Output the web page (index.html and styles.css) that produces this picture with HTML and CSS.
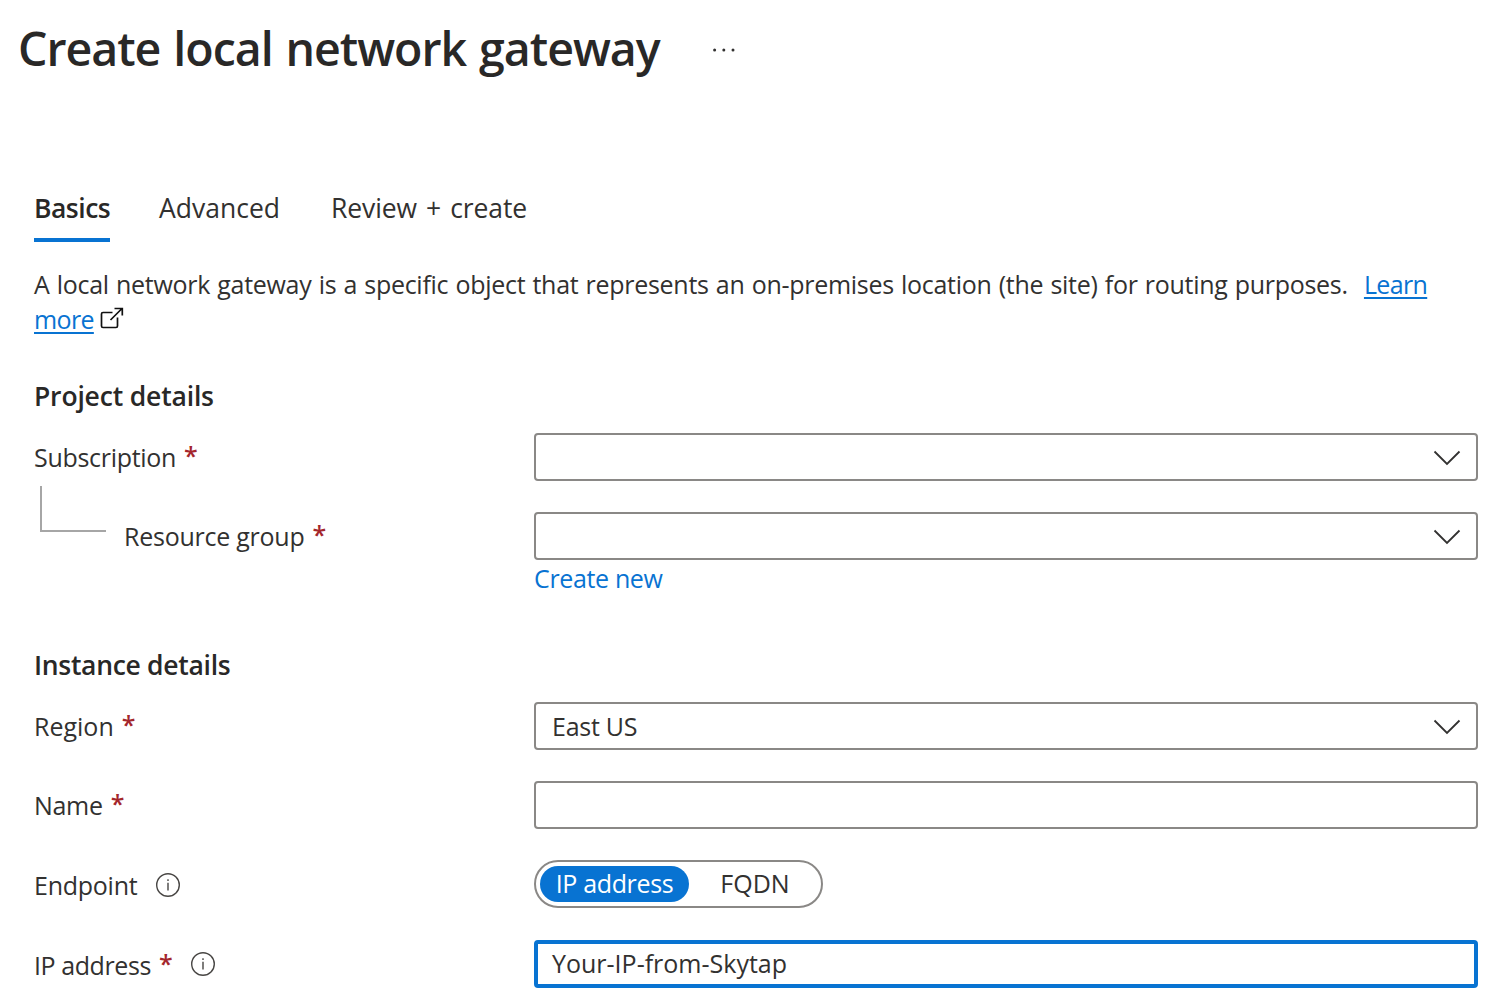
FILE: index.html
```html
<!DOCTYPE html>
<html lang="en">
<head>
<meta charset="utf-8">
<title>Create local network gateway</title>
<link rel="stylesheet" href="styles.css">
</head>
<body>
<header class="header">
  <h1 class="title">Create local network gateway</h1>
  <svg class="more-menu" width="24" height="6" viewBox="0 0 24 6"><circle cx="2.6" cy="3" r="1.5"/><circle cx="11.8" cy="3" r="1.5"/><circle cx="21" cy="3" r="1.5"/></svg>
</header>
<main class="content">
  <nav class="tabs">
    <a class="tab tab-active">Basics</a>
    <a class="tab tab-advanced">Advanced</a>
    <a class="tab tab-review">Review + create</a>
  </nav>
  <p class="description">A local network gateway is a specific object that represents an on-premises location (the site) for routing purposes. <a class="link">Learn<br>more</a><svg class="external" width="24" height="22" viewBox="0 0 24 22"><path d="M12.500 5.500H3a1.500 1.500 0 0 0-1.500 1.500V19a1.500 1.500 0 0 0 1.500 1.500H16a1.500 1.500 0 0 0 1.500-1.500V10.500M10.500 13L22 1.500M14.500 1.500H22.300V8.500"/></svg></p>

  <section class="section">
    <h2 class="heading">Project details</h2>
    <div class="row">
      <label class="label"><span class="tight">Subscription</span><span class="required">*</span></label>
      <div class="field"><svg class="chevron" width="28" height="16" viewBox="0 0 28 16"><path d="M1.500 1.500L14 14L26.500 1.500"/></svg></div>
    </div>
    <div class="row">
      <label class="label label-nested"><i class="branch"></i><span>Resource group</span><span class="required">*</span></label>
      <div class="field"><svg class="chevron" width="28" height="16" viewBox="0 0 28 16"><path d="M1.500 1.500L14 14L26.500 1.500"/></svg></div>
    </div>
    <a class="create-new">Create new</a>
  </section>

  <section class="section section-instance">
    <h2 class="heading heading-instance">Instance details</h2>
    <div class="row">
      <label class="label"><span class="loose">Region</span><span class="required">*</span></label>
      <div class="field"><span class="value">East US</span><svg class="chevron" width="28" height="16" viewBox="0 0 28 16"><path d="M1.500 1.500L14 14L26.500 1.500"/></svg></div>
    </div>
    <div class="row">
      <label class="label"><span class="tight">Name</span><span class="required">*</span></label>
      <div class="field"></div>
    </div>
    <div class="row">
      <label class="label label-low"><span>Endpoint</span><svg class="info info-endpoint" width="24" height="24" viewBox="0 0 24 24"><circle cx="12" cy="12" r="11.300"/><path d="M12 9.800V17.500M12 6.300V8"/></svg></label>
      <div class="toggle"><span class="option option-selected">IP address</span><span class="option">FQDN</span></div>
    </div>
    <div class="row row-last">
      <label class="label label-low"><span class="tighter">IP address</span><span class="required">*</span><svg class="info" width="24" height="24" viewBox="0 0 24 24"><circle cx="12" cy="12" r="11.300"/><path d="M12 9.800V17.500M12 6.300V8"/></svg></label>
      <div class="field field-focused"><span class="value value-ip">Your-IP-from-Skytap</span></div>
    </div>
  </section>
</main>
</body>
</html>
```
FILE: styles.css
```css
* { box-sizing: border-box; }
body {
  margin: 0;
  background: #fff;
  color: #323130;
  font: 400 25px/36px "Open Sans", "Noto Sans", sans-serif;
  overflow: hidden;
}
.header { display: flex; align-items: center; height: 78px; padding: 18px 0 0 18px; }
.title {
  margin: 0;
  width: 694px;
  color: #292827;
  font-size: 46.5px;
  font-weight: 600;
  line-height: 60px;
  letter-spacing: -1.02px;
  word-spacing: 1.9px;
  white-space: nowrap;
}
.more-menu { margin-top: 4px; fill: #323130; }
.content { padding: 112px 20px 0 34px; }
.tabs { display: flex; height: 52px; font-size: 26.5px; }
.tab { height: 52px; white-space: nowrap; }
.tab-active {
  width: 76px;
  margin-right: 49px;
  border-bottom: 4px solid #0873d2;
  color: #292827;
  font-weight: 600;
  letter-spacing: -0.5px;
}
.tab-advanced { width: 172px; letter-spacing: 0; }
.tab-review { letter-spacing: -0.1px; word-spacing: 2.3px; }
.description {
  margin: 25px 0 0;
  line-height: 35px;
  letter-spacing: -0.28px;
  word-spacing: 0.95px;
  white-space: nowrap;
}
.link {
  margin-left: 9px;
  color: #0873d2;
  letter-spacing: -0.65px;
  text-decoration: underline;
  text-decoration-thickness: 2px;
  text-underline-offset: 3px;
}
.external { margin-left: 6px; fill: none; stroke: #111; stroke-width: 1.7; }
.section { padding-top: 41px; }
.section-instance { padding-top: 51px; }
.heading {
  margin: 0 0 19px;
  color: #292827;
  font-size: 26.5px;
  font-weight: 600;
  line-height: 36px;
  letter-spacing: -0.17px;
}
.heading-instance { letter-spacing: -0.3px; }
.row { display: flex; height: 48px; margin-bottom: 31px; }
.row-last { margin: 32px 0 0; }
.label { display: flex; align-items: center; width: 500px; letter-spacing: -0.25px; white-space: nowrap; }
.label-low { padding-top: 2px; }
.label-nested { padding-left: 6px; }
.tight { letter-spacing: -0.3px; }
.tighter { letter-spacing: -0.42px; }
.loose { letter-spacing: 0; }
.required { margin: -5px 0 0 8px; color: #a4262c; font-weight: 600; }
.branch {
  align-self: flex-start;
  width: 66px;
  height: 46px;
  margin: -26px 18px 0 0;
  border: solid #a6a6a6;
  border-width: 0 0 2px 2px;
}
.info { margin: -3px 0 0 19px; fill: none; stroke: #484644; stroke-width: 1.4; }
.info-endpoint { margin-top: -1px; }
.field {
  display: flex;
  align-items: center;
  width: 944px;
  padding: 0 15px 0 16px;
  border: 2px solid #8a8886;
  border-radius: 4px;
}
.field-focused { padding-left: 14px; border: 4px solid #0873d2; }
.value { letter-spacing: -0.25px; }
.value-ip { margin-top: -3px; letter-spacing: 0; }
.chevron { margin: 2px 0 0 auto; fill: none; stroke: #323130; stroke-width: 1.8; }
.create-new {
  display: block;
  margin: -31px 0 0 500px;
  color: #0873d2;
  letter-spacing: -0.35px;
}
.toggle {
  display: flex;
  width: 289px;
  padding: 4px;
  border: 2px solid #8a8886;
  border-radius: 24px;
}
.option {
  flex: 1;
  padding-left: 4px;
  line-height: 35px;
  text-align: center;
}
.option-selected {
  flex: none;
  width: 149px;
  padding-left: 0;
  border-radius: 18px;
  background: #0873d2;
  color: #fff;
  letter-spacing: -0.35px;
}
```
